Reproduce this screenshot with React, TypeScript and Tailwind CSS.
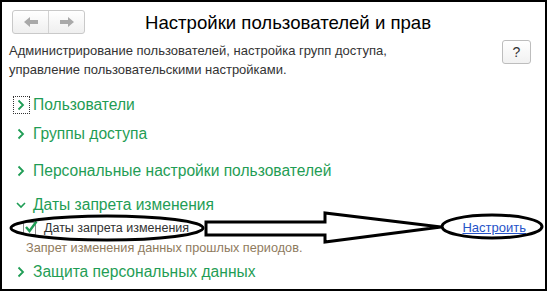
import React from "react";

const green = "text-[#1f9d55]";

function Chevron({ open = false }: { open?: boolean }) {
  if (open) {
    return (
      <svg width="10" height="8" viewBox="0 0 10 8" className="block">
        <path d="M1 2 L5 6 L9 2" fill="none" stroke="#1f9d55" strokeWidth="1.6" />
      </svg>
    );
  }
  return (
    <svg width="8" height="12" viewBox="0 0 8 12" className="block">
      <path d="M1.5 1.5 L6 6 L1.5 10.5" fill="none" stroke="#1f9d55" strokeWidth="1.8" />
    </svg>
  );
}

function Section({ title, open, focused, className }: { title: string; open?: boolean; focused?: boolean; className?: string }) {
  return (
    <div className={`flex items-center h-[22px] ${className ?? ""}`}>
      <div className="w-[31px] flex justify-center items-center pl-[7px]">
        {focused ? (
          <div className="w-[17px] h-[18px] border border-dotted border-[#333] flex items-center justify-center">
            <Chevron />
          </div>
        ) : (
          <Chevron open={open} />
        )}
      </div>
      <span className={`text-[15.6px] ${green} whitespace-nowrap`}>{title}</span>
    </div>
  );
}

function NavArrow({ dir }: { dir: "left" | "right" }) {
  return (
    <svg width="16" height="12" viewBox="0 0 16 12" className={dir === "right" ? "scale-x-[-1]" : ""}>
      <path d="M1 6 L7 1 L7 4 L15 4 L15 8 L7 8 L7 11 Z" fill="#a9a9a9" />
    </svg>
  );
}

export default function App() {
  return (
    <div className="relative w-[550px] h-[293px] bg-white" style={{ fontFamily: '"Liberation Sans", Arial, sans-serif' }}>
      <div className="w-[547px] h-[291px] border-2 border-black bg-white">
        {/* header */}
        <div className="flex items-center pt-[8px] pl-[10px]">
          <div className="flex w-[73px] h-[24px] border border-[#c9c9c9] rounded-[3px] bg-gradient-to-b from-white to-[#efefef]">
            <div className="flex-1 flex items-center justify-center border-r border-[#d2d2d2]">
              <NavArrow dir="left" />
            </div>
            <div className="flex-1 flex items-center justify-center">
              <NavArrow dir="right" />
            </div>
          </div>
          <h1 className="ml-[60px] mt-[3px] text-[18.6px] text-black leading-none whitespace-nowrap">Настройки пользователей и прав</h1>
        </div>

        {/* description + help */}
        <div className="flex items-start justify-between mt-[6px] pl-[7px] pr-[14px]">
          <p className="text-[13px] leading-[19px] mt-[1px] text-[#333]">
            Администрирование пользователей, настройка групп доступа,
            <br />
            управление пользовательскими настройками.
          </p>
          <button className="w-[29px] h-[24px] border border-[#bdbdbd] rounded-[3px] bg-gradient-to-b from-white to-[#f1f1f1] text-[14px] text-[#333] flex items-center justify-center">
            ?
          </button>
        </div>

        {/* sections */}
        <Section title="Пользователи" focused className="mt-[15px]" />
        <Section title="Группы доступа" className="mt-[7px]" />
        <Section title="Персональные настройки пользователей" className="mt-[15px]" />
        <Section title="Даты запрета изменения" open className="mt-[12px]" />

        <div className="flex items-center h-[20px] mt-[2px] pl-[21px] pr-[19px]">
          <div className="relative w-[13px] h-[13px] border border-[#8a8a8a] bg-white">
            <svg width="14" height="14" viewBox="0 0 14 14" className="absolute -top-[3px] left-0">
              <path d="M2 7 L5.5 11 L12.5 1.5" fill="none" stroke="#1f9d55" strokeWidth="2.4" />
            </svg>
          </div>
          <span className="ml-[8px] text-[12.5px] text-[#333]">Даты запрета изменения</span>
          <a href="#" className="ml-auto text-[13px] text-[#2553c9] underline">Настроить</a>
        </div>
        <div className="mt-[2px] pl-[24px] text-[12.7px] leading-[16px] text-[#8f7b5e]">
          Запрет изменения данных прошлых периодов.
        </div>

        <Section title="Защита персональных данных" className="mt-[5px]" />
      </div>

      {/* annotation overlay */}
      <svg width="550" height="293" className="absolute top-0 left-0 pointer-events-none">
        <ellipse cx="107" cy="228" rx="96" ry="12" fill="none" stroke="#000" strokeWidth="3" />
        <path d="M206 222 L325 222 L325 213 L441 227 L325 242 L325 235 L206 235 Z" fill="#fff" stroke="#000" strokeWidth="3" strokeLinejoin="miter" />
        <ellipse cx="492" cy="226.5" rx="50" ry="11.5" fill="none" stroke="#000" strokeWidth="3" />
      </svg>
    </div>
  );
}
